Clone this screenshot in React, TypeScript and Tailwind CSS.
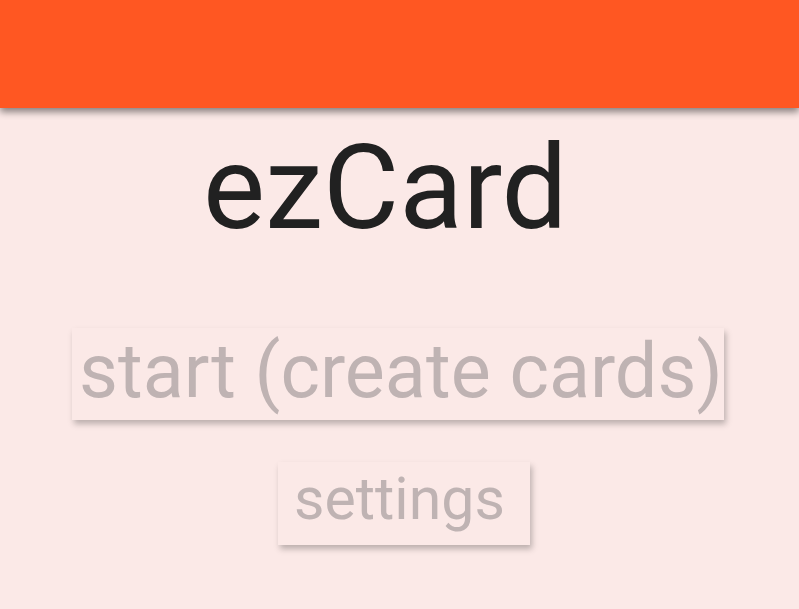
import React from "react";

export default function App() {
  return (
    <div
      className="w-[799px] h-[609px] bg-[#fbe9e7] overflow-hidden flex flex-col"
      style={{ fontFamily: "Roboto, 'Noto Sans', sans-serif" }}
    >
      <div className="h-[108px] shrink-0 bg-[#ff5722] shadow-[0_4px_7px_rgba(0,0,0,0.45)] relative z-10" />
      <div className="flex flex-col">
        <div className="pl-[203px] mt-[22px] text-[117px] leading-[117px] text-[#212121]">ezCard</div>
        <div className="ml-[72px] mt-[81px] w-[652px] h-[92px] bg-[#fbe9e7] shadow-[2px_4px_6px_rgba(0,0,0,0.25)] flex items-center pl-[7px] text-[75.5px] leading-none text-[#bfb3b3] whitespace-nowrap">
          <span className="-mt-[4px]">start (create cards)</span>
        </div>
        <div className="ml-[278px] mt-[42px] w-[252px] h-[83px] bg-[#fbe9e7] shadow-[2px_4px_6px_rgba(0,0,0,0.25)] flex items-center pl-[16px] text-[59px] leading-none text-[#bfb3b3] whitespace-nowrap">
          <span className="-mt-[10px]">settings</span>
        </div>
      </div>
    </div>
  );
}
